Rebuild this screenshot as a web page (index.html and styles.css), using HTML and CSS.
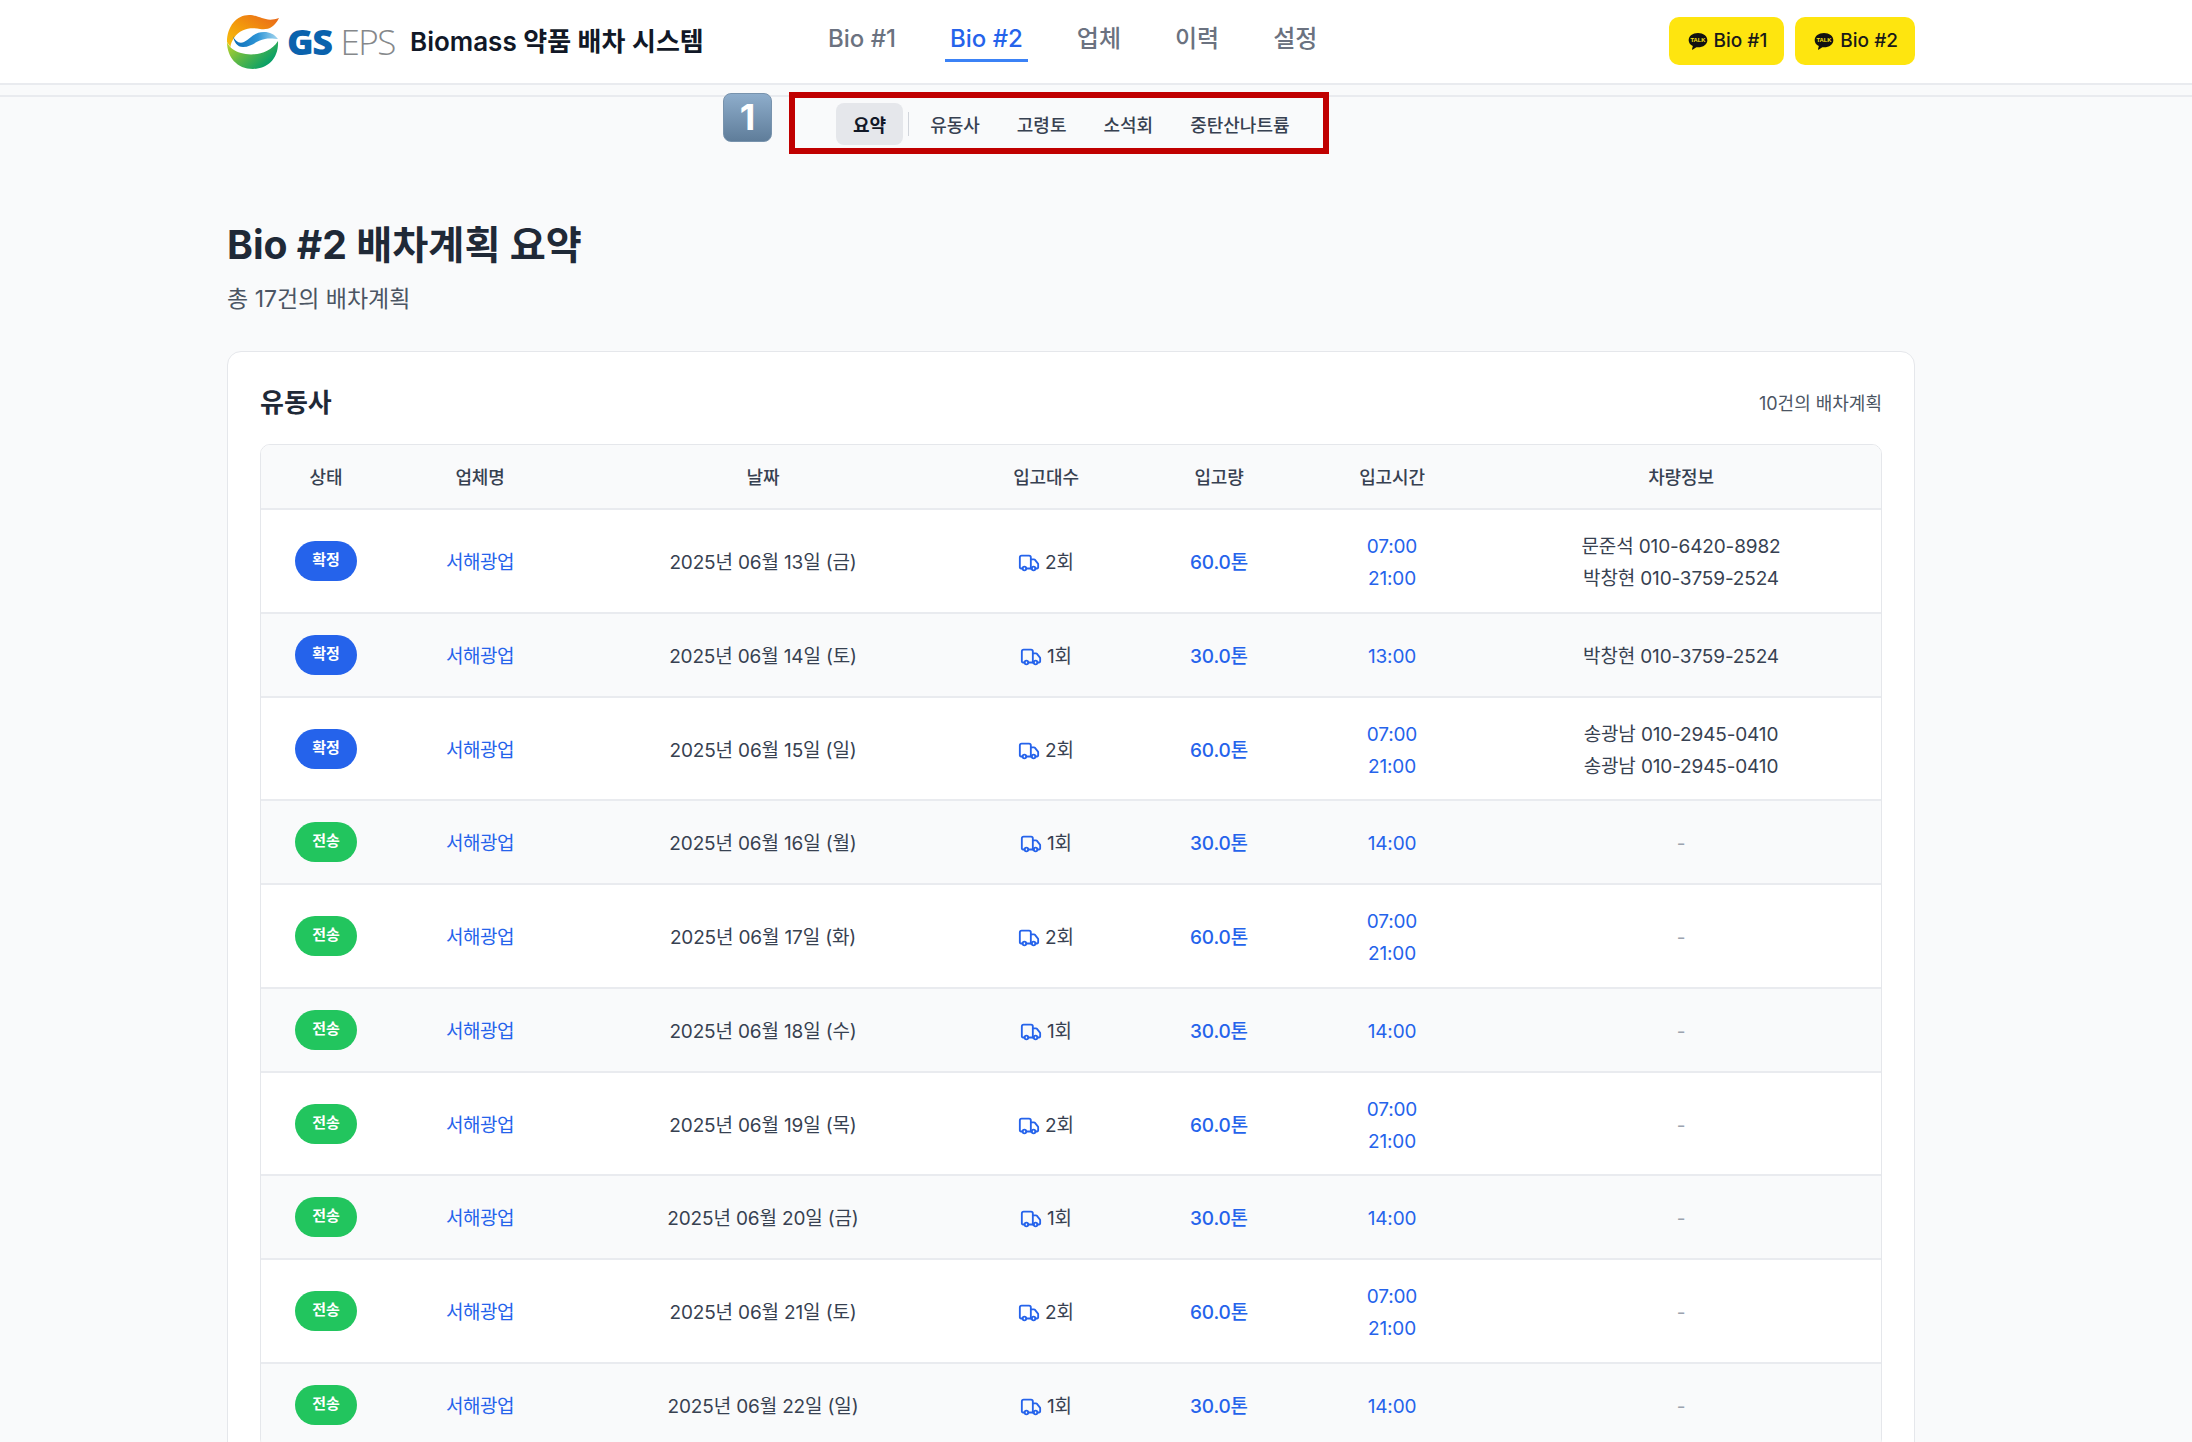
FILE: index.html
```html
<!DOCTYPE html>
<html lang="ko">
<head>
    <meta charset="UTF-8">
    <title>Biomass 약품 배차 시스템</title>
    <link rel="stylesheet" href="styles.css">
</head>
<body>
    <svg class="icon-defs" width="0" height="0" aria-hidden="true">
        <defs>
            <linearGradient id="ringTop" x1="1" y1="0" x2="0" y2="1">
                <stop offset="0" stop-color="#e8641b"/>
                <stop offset="0.55" stop-color="#f39a0c"/>
                <stop offset="1" stop-color="#f6c20f"/>
            </linearGradient>
            <linearGradient id="ringBottom" x1="0" y1="0" x2="1" y2="0.6">
                <stop offset="0" stop-color="#c4d52a"/>
                <stop offset="0.45" stop-color="#5fb946"/>
                <stop offset="1" stop-color="#009d6b"/>
            </linearGradient>
            <linearGradient id="wave" x1="0" y1="0" x2="1" y2="0">
                <stop offset="0" stop-color="#0a6cb6"/>
                <stop offset="0.55" stop-color="#2e95d6"/>
                <stop offset="1" stop-color="#a5d6ef"/>
            </linearGradient>
            <symbol id="truck" viewBox="0 0 24 24">
                <path d="M14 18V6a2 2 0 0 0-2-2H4a2 2 0 0 0-2 2v11a1 1 0 0 0 1 1h2"/>
                <path d="M15 18H9"/>
                <path d="M19 18h2a1 1 0 0 0 1-1v-3.65a1 1 0 0 0-.22-.62l-3.48-4.35A1 1 0 0 0 17.52 8H14"/>
                <circle cx="17" cy="18" r="2"/>
                <circle cx="7" cy="18" r="2"/>
            </symbol>
            <symbol id="talk" viewBox="0 0 24 24">
                <path d="M12 2.500C5.600 2.500.8 6.300.8 11c0 3 2 5.600 5 7.100l-1 3.900c-.1.400.3.600.6.400l4.600-3c.6.100 1.300.100 2 .100 6.400 0 11.200-3.800 11.200-8.500S18.400 2.500 12 2.500z"/>
                <text x="12" y="13.500" text-anchor="middle" class="talk-text">TALK</text>
            </symbol>
        </defs>
    </svg>

    <header class="topbar">
        <div class="topbar-inner">
            <a class="logo" href="#">
                <svg class="logo-mark" viewBox="0 0 52 55" aria-hidden="true">
                    <path fill="url(#ringTop)" d="M52 4C47 14 41 16 33 15C25 13 13 14 7 24C5 27 3.500 30 3.500 33L0 28C0 12 10 1 22 1C33 1 38 9 52 4Z"/>
                    <path fill="url(#ringBottom)" d="M0 28C2 33 7 37 14 39C24 42 42 41 51 27C52 45 40 55 26 55C10 55 0 43 0 28Z"/>
                    <path fill="url(#wave)" d="M6 22C7 28 10 33 16 33C25 33 30 26 38 25C43 24 48 25 51 25C47 20 43 18 37 18C27 18 24 24 17 28C12 30 8 27 6 22Z"/>
                </svg>
                <span class="logo-gs">GS</span>
                <span class="logo-eps">EPS</span>
            </a>
            <span class="app-title">Biomass 약품 배차 시스템</span>
            <nav class="main-nav">
                <a href="#">Bio #1</a>
                <a href="#" class="active">Bio #2</a>
                <a href="#">업체</a>
                <a href="#">이력</a>
                <a href="#">설정</a>
            </nav>
            <div class="talk-buttons">
                <button class="talk-btn"><svg class="talk-icon"><use href="#talk"/></svg>Bio #1</button>
                <button class="talk-btn"><svg class="talk-icon"><use href="#talk"/></svg>Bio #2</button>
            </div>
        </div>
    </header>

    <div class="subnav">
        <div class="step-badge">1</div>
        <div class="highlight-box"></div>
        <nav class="tabs">
            <a href="#" class="tab active">요약</a>
            <span class="tab-sep"></span>
            <a href="#" class="tab">유동사</a>
            <a href="#" class="tab">고령토</a>
            <a href="#" class="tab">소석회</a>
            <a href="#" class="tab">중탄산나트륨</a>
        </nav>
    </div>

    <main class="content">
        <h1 class="page-title">Bio #2 배차계획 요약</h1>
        <p class="page-sub">총 17건의 배차계획</p>

        <section class="card">
            <div class="card-head">
                <h2>유동사</h2>
                <span class="count">10건의 배차계획</span>
            </div>
            <div class="table-wrap">
                <table class="plan-table">
                    <thead>
                        <tr>
                            <th class="col-status">상태</th>
                            <th class="col-name">업체명</th>
                            <th class="col-date">날짜</th>
                            <th class="col-trips">입고대수</th>
                            <th class="col-amount">입고량</th>
                            <th class="col-time">입고시간</th>
                            <th class="col-car">차량정보</th>
                        </tr>
                    </thead>
                    <tbody>
                        <tr>
                            <td class="status-cell"><span class="badge blue">확정</span></td>
                            <td class="link company">서해광업</td>
                            <td>2025년 06월 13일 (금)</td>
                            <td><svg class="truck"><use href="#truck"/></svg>2회</td>
                            <td class="link strong">60.0톤</td>
                            <td class="link"><div>07:00</div><div>21:00</div></td>
                            <td><div>문준석 010-6420-8982</div><div>박창현 010-3759-2524</div></td>
                        </tr>
                        <tr>
                            <td class="status-cell"><span class="badge blue">확정</span></td>
                            <td class="link company">서해광업</td>
                            <td>2025년 06월 14일 (토)</td>
                            <td><svg class="truck"><use href="#truck"/></svg>1회</td>
                            <td class="link strong">30.0톤</td>
                            <td class="link"><div>13:00</div></td>
                            <td><div>박창현 010-3759-2524</div></td>
                        </tr>
                        <tr>
                            <td class="status-cell"><span class="badge blue">확정</span></td>
                            <td class="link company">서해광업</td>
                            <td>2025년 06월 15일 (일)</td>
                            <td><svg class="truck"><use href="#truck"/></svg>2회</td>
                            <td class="link strong">60.0톤</td>
                            <td class="link"><div>07:00</div><div>21:00</div></td>
                            <td><div>송광남 010-2945-0410</div><div>송광남 010-2945-0410</div></td>
                        </tr>
                        <tr>
                            <td class="status-cell"><span class="badge green">전송</span></td>
                            <td class="link company">서해광업</td>
                            <td>2025년 06월 16일 (월)</td>
                            <td><svg class="truck"><use href="#truck"/></svg>1회</td>
                            <td class="link strong">30.0톤</td>
                            <td class="link"><div>14:00</div></td>
                            <td class="empty">-</td>
                        </tr>
                        <tr>
                            <td class="status-cell"><span class="badge green">전송</span></td>
                            <td class="link company">서해광업</td>
                            <td>2025년 06월 17일 (화)</td>
                            <td><svg class="truck"><use href="#truck"/></svg>2회</td>
                            <td class="link strong">60.0톤</td>
                            <td class="link"><div>07:00</div><div>21:00</div></td>
                            <td class="empty">-</td>
                        </tr>
                        <tr>
                            <td class="status-cell"><span class="badge green">전송</span></td>
                            <td class="link company">서해광업</td>
                            <td>2025년 06월 18일 (수)</td>
                            <td><svg class="truck"><use href="#truck"/></svg>1회</td>
                            <td class="link strong">30.0톤</td>
                            <td class="link"><div>14:00</div></td>
                            <td class="empty">-</td>
                        </tr>
                        <tr>
                            <td class="status-cell"><span class="badge green">전송</span></td>
                            <td class="link company">서해광업</td>
                            <td>2025년 06월 19일 (목)</td>
                            <td><svg class="truck"><use href="#truck"/></svg>2회</td>
                            <td class="link strong">60.0톤</td>
                            <td class="link"><div>07:00</div><div>21:00</div></td>
                            <td class="empty">-</td>
                        </tr>
                        <tr>
                            <td class="status-cell"><span class="badge green">전송</span></td>
                            <td class="link company">서해광업</td>
                            <td>2025년 06월 20일 (금)</td>
                            <td><svg class="truck"><use href="#truck"/></svg>1회</td>
                            <td class="link strong">30.0톤</td>
                            <td class="link"><div>14:00</div></td>
                            <td class="empty">-</td>
                        </tr>
                        <tr>
                            <td class="status-cell"><span class="badge green">전송</span></td>
                            <td class="link company">서해광업</td>
                            <td>2025년 06월 21일 (토)</td>
                            <td><svg class="truck"><use href="#truck"/></svg>2회</td>
                            <td class="link strong">60.0톤</td>
                            <td class="link"><div>07:00</div><div>21:00</div></td>
                            <td class="empty">-</td>
                        </tr>
                        <tr>
                            <td class="status-cell"><span class="badge green">전송</span></td>
                            <td class="link company">서해광업</td>
                            <td>2025년 06월 22일 (일)</td>
                            <td><svg class="truck"><use href="#truck"/></svg>1회</td>
                            <td class="link strong">30.0톤</td>
                            <td class="link"><div>14:00</div></td>
                            <td class="empty">-</td>
                        </tr>
                    </tbody>
                </table>
            </div>
        </section>
    </main>
</body>
</html>
```

FILE: styles.css
```css
* {
    box-sizing: border-box;
}
html, body {
    height: 100%;
}
body {
    margin: 0;
    overflow: hidden;
    background: #f9fafb;
    color: #1f2937;
    font-family: Inter, "Noto Sans CJK KR", sans-serif;
}
a {
    text-decoration: none;
    color: inherit;
}
.icon-defs {
    position: absolute;
}

/* top bar */
.topbar {
    height: 85px;
    background: #ffffff;
    border-bottom: 2px solid #e9ebef;
}
.topbar-inner {
    width: 1688px;
    height: 83px;
    margin-left: 227px;
    display: flex;
    align-items: center;
}
.logo {
    display: flex;
    align-items: center;
    width: 183px;
}
.logo-mark {
    width: 52px;
    height: 55px;
    margin-right: 8px;
}
.logo-gs {
    font-family: "Open Sans", sans-serif;
    font-weight: 800;
    font-size: 36px;
    letter-spacing: -1.5px;
    color: #0a62ad;
}
.logo-eps {
    font-family: "Open Sans", sans-serif;
    font-weight: 300;
    font-size: 35px;
    letter-spacing: -1.5px;
    color: #85888b;
    margin-left: 9px;
}
.app-title {
    font-size: 26px;
    font-weight: 600;
    color: #111827;
    width: 413px;
    padding-bottom: 5px;
    white-space: nowrap;
}
.main-nav {
    display: flex;
    gap: 44px;
    font-size: 24px;
    font-weight: 500;
    line-height: 32px;
    color: #6b7280;
}
.main-nav a {
    padding: 2px 5px 4px;
    border-bottom: 3px solid transparent;
}
.main-nav a.active {
    color: #2563eb;
    border-bottom-color: #3b82f6;
}
.talk-buttons {
    margin-left: auto;
    margin-bottom: 2px;
    display: flex;
    gap: 11px;
}
.talk-btn {
    display: flex;
    align-items: center;
    height: 48px;
    padding: 0 17px 0 19px;
    border: none;
    border-radius: 10px;
    background: #fee50f;
    color: #191919;
    font-family: inherit;
    font-size: 19px;
    font-weight: 500;
}
.talk-icon {
    width: 20px;
    height: 20px;
    margin-right: 6px;
    fill: #111111;
}
.talk-text {
    font-family: "Liberation Sans", sans-serif;
    font-size: 7px;
    font-weight: 700;
    fill: #fee50f;
}

/* sub navigation */
.subnav {
    position: relative;
    height: 60px;
    margin-top: 10px;
    border-top: 2px solid #e9ebef;
}
.tabs {
    display: flex;
    align-items: center;
    width: 520px;
    height: 54px;
    margin-left: 836px;
    font-size: 18px;
    font-weight: 500;
    color: #374151;
}
.tab {
    padding: 8px 17px;
    margin-right: 3px;
    border-radius: 8px;
    white-space: nowrap;
}
.tab.active {
    background: #e5e7eb;
    color: #111827;
    font-weight: 700;
}
.tab-sep {
    width: 1px;
    height: 24px;
    margin: 0 4px 0 2px;
    background: #d1d5db;
}
.step-badge {
    position: absolute;
    left: 723px;
    top: -4px;
    width: 49px;
    height: 49px;
    border-radius: 8px;
    border: 1px solid #7893ad;
    background: linear-gradient(#8eadcb, #5f7d9a);
    color: #ffffff;
    font-size: 36px;
    font-weight: 700;
    line-height: 46px;
    text-align: center;
}
.highlight-box {
    position: absolute;
    left: 789px;
    top: -5px;
    width: 540px;
    height: 62px;
    border: 6px solid #c00000;
}

/* page */
.content {
    width: 1688px;
    margin-left: 227px;
}
.page-title {
    margin: 66px 0 0;
    font-size: 39.2px;
    font-weight: 700;
    line-height: 48px;
    color: #1f2937;
}
.page-sub {
    margin: 15px 0 0;
    font-size: 23px;
    line-height: 30px;
    color: #4b5563;
}
.card {
    margin-top: 37px;
    padding: 32px;
    background: #ffffff;
    border: 1px solid #e5e7eb;
    border-radius: 14px;
}
.card-head {
    display: flex;
    justify-content: space-between;
    align-items: center;
    height: 34px;
    margin-bottom: 26px;
}
.card-head h2 {
    margin: 0 0 2px;
    font-size: 26px;
    font-weight: 700;
    color: #1f2937;
}
.count {
    padding-top: 2px;
    font-size: 18px;
    color: #4b5563;
}

/* table */
.table-wrap {
    border: 1px solid #e5e7eb;
    border-radius: 10px;
    overflow: hidden;
}
.plan-table {
    width: 100%;
    border-collapse: collapse;
    table-layout: fixed;
    text-align: center;
    font-size: 19px;
    letter-spacing: -0.15px;
    color: #374151;
}
.plan-table th {
    height: 64px;
    padding-bottom: 2px;
    background: #f9fafb;
    font-size: 18px;
    font-weight: 500;
    color: #374151;
    border-bottom: 2px solid #e9ebef;
}
.col-status { width: 130px; }
.col-name { width: 178px; }
.col-date { width: 388px; }
.col-trips { width: 178px; }
.col-amount { width: 168px; }
.col-time { width: 178px; }
.plan-table td {
    height: 84px;
    padding: 21px 0 17px;
    line-height: 32px;
    border-bottom: 2px solid #e9ebef;
}
.plan-table td.status-cell {
    padding: 18px 0;
}
.plan-table tbody tr:nth-child(4n+3) td:not(.status-cell) {
    padding-bottom: 16px;
}
.plan-table tbody tr:nth-child(even) {
    background: #f9fafb;
}
.link {
    color: #2563eb;
}
.company {
    letter-spacing: -0.5px;
}
.strong {
    font-weight: 500;
}
.empty {
    color: #9ca3af;
}
.badge {
    display: block;
    width: 62px;
    height: 40px;
    margin: 0 auto;
    border-radius: 20px;
    color: #ffffff;
    font-size: 15px;
    font-weight: 700;
    line-height: 38px;
}
.badge.blue {
    background: #2563eb;
}
.badge.green {
    background: #22c55e;
}
.truck {
    width: 22px;
    height: 22px;
    margin-right: 5px;
    vertical-align: -5px;
    fill: none;
    stroke: #2563eb;
    stroke-width: 2;
    stroke-linecap: round;
    stroke-linejoin: round;
}
```
